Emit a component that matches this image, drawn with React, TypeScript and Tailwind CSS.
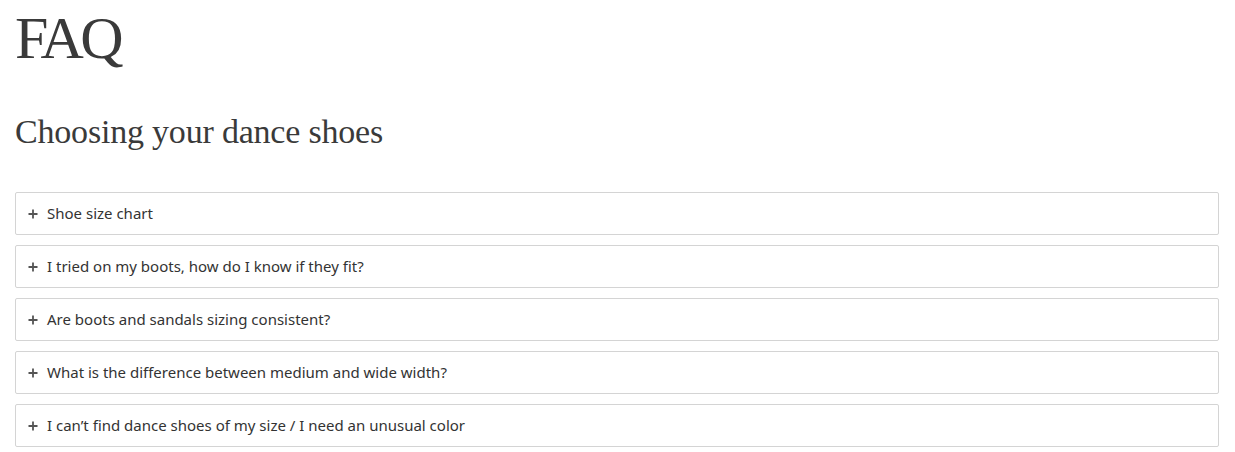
const questions = [
  'Shoe size chart',
  'I tried on my boots, how do I know if they fit?',
  'Are boots and sandals sizing consistent?',
  'What is the difference between medium and wide width?',
  'I can’t find dance shoes of my size / I need an unusual color',
]

function PlusIcon() {
  return (
    <svg width="10" height="10" viewBox="0 0 10 10" className="text-[#555] shrink-0">
      <path d="M5 0.5v9M0.5 5h9" stroke="currentColor" strokeWidth="1.8" />
    </svg>
  )
}

export default function App() {
  return (
    <div className="bg-white min-h-screen px-[15px] pt-[4px] text-[#3a3a3a]">
      {/* Page title */}
      <h1 className="font-['Liberation_Serif',serif] text-[60px] leading-[68px] tracking-[-3.5px]">FAQ</h1>

      {/* Section heading */}
      <h2 className="font-['Liberation_Serif',serif] text-[34px] leading-[40px] mt-[40px] tracking-[-0.2px]">
        Choosing your dance shoes
      </h2>

      <div className="mt-[40px] w-[1204px] flex flex-col gap-[10px]">
        {questions.map((q) => (
          <div
            key={q}
            className="h-[43px] border border-[#d4d4d4] rounded-[2px] flex items-center pl-[12px] gap-[9px] font-['Noto_Sans',sans-serif] text-[15px] text-[#333]"
          >
            <PlusIcon />
            <span>{q}</span>
          </div>
        ))}
      </div>
    </div>
  )
}
